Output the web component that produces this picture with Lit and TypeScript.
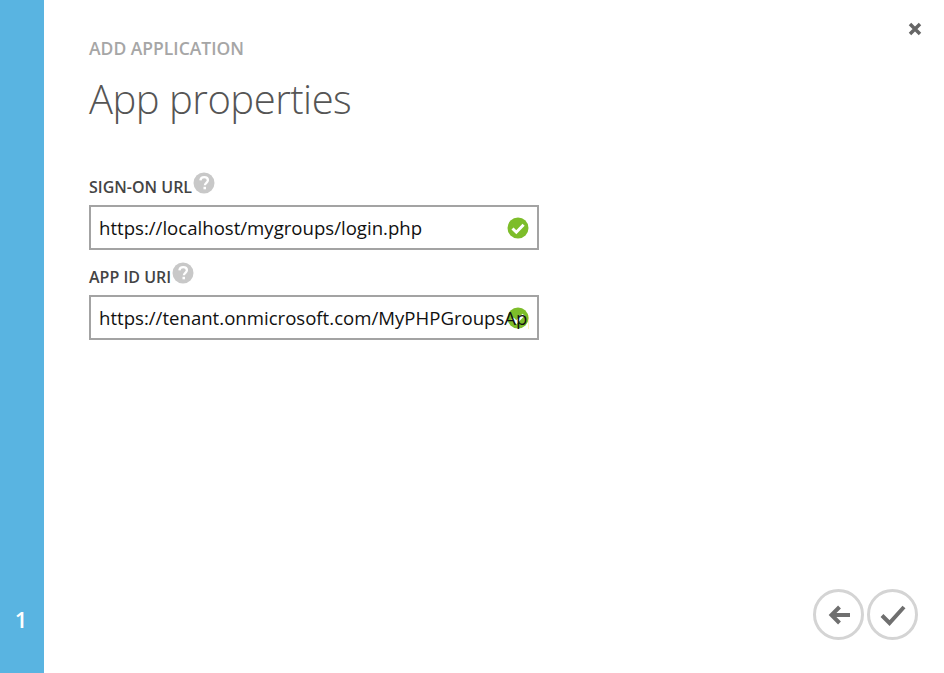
import { LitElement, html, css } from 'lit'
import { customElement } from 'lit/decorators.js'

const helpIcon = html`
  <svg class="help" viewBox="0 0 22 22" width="22" height="22">
    <circle cx="11" cy="11" r="10.500" fill="#c8c8c8" />
    <path d="M7.400 8.400c.2-2.100 1.700-3.200 3.800-3.200 2.200 0 3.700 1.200 3.700 3 0 2.600-3 2.700-3 5.100" fill="none" stroke="#fff" stroke-width="2.300" />
    <rect x="10.500" y="14.800" width="2.500" height="2.500" fill="#fff" />
  </svg>
`

const okIcon = html`
  <svg class="ok" viewBox="0 0 22 22" width="22" height="22">
    <circle cx="11" cy="11" r="10.500" fill="#7dbd2a" />
    <path d="M5.500 11.500l3.800 3.700 7.300-7.400" fill="none" stroke="#fff" stroke-width="3" />
  </svg>
`

@customElement('app-root')
export class AppRoot extends LitElement {
  static styles = css`
    :host {
      display: flex;
      width: 944px;
      height: 673px;
      background: #fff;
      font-family: "Open Sans", "Noto Sans", "Liberation Sans", sans-serif;
      overflow: hidden;
    }

    .steps {
      width: 44px;
      flex: none;
      background: #59b4e1;
      display: flex;
      flex-direction: column;
      justify-content: flex-end;
      align-items: center;
      padding: 0 2px 39px 0;
      box-sizing: border-box;
      color: #fff;
      font-size: 22px;
      font-weight: 600;
      line-height: 30px;
    }

    .main {
      flex: 1;
      position: relative;
      display: flex;
      flex-direction: column;
      padding: 37px 26px 33px 45px;
      min-width: 0;
    }

    .close {
      position: absolute;
      top: 22px;
      right: 22px;
      display: block;
      filter: blur(0.4px);
    }

    .eyebrow {
      font-size: 17.500px;
      font-weight: 600;
      line-height: 22px;
      color: #a6a6a6;
      margin: 0;
    }

    h1 {
      font-size: 40px;
      font-weight: 300;
      line-height: 58px;
      color: #555;
      margin: 11px 0 0;
      letter-spacing: -0.5px;
    }

    .form {
      margin-top: 43px;
      display: flex;
      flex-direction: column;
      gap: 11px;
      width: 450px;
    }

    .field {
      display: flex;
      flex-direction: column;
    }

    .label {
      display: flex;
      align-items: flex-start;
      height: 34px;
      font-size: 16px;
      font-weight: 600;
      line-height: 22px;
      color: #444;
      padding-top: 3px;
      box-sizing: border-box;
    }

    .label span {
      margin-top: 2px;
    }

    .help {
      margin: -2px 0 0 1px;
    }

    .control {
      position: relative;
      height: 45px;
    }

    .ok {
      position: absolute;
      top: 12px;
      right: 10px;
    }

    input {
      position: relative;
      width: 100%;
      height: 100%;
      box-sizing: border-box;
      border: 2px solid #a3a3a3;
      background: transparent;
      padding: 0 8px;
      margin: 0;
      outline: none;
      font: inherit;
      font-size: 18.600px;
      color: #111;
    }

    .actions {
      margin-top: auto;
      display: flex;
      justify-content: flex-end;
      gap: 3px;
    }

    .action {
      width: 51px;
      height: 51px;
      padding: 0;
      border: 3px solid #d4d4d4;
      border-radius: 50%;
      background: #fff;
      box-sizing: border-box;
      display: flex;
      align-items: center;
      justify-content: center;
      cursor: pointer;
      filter: blur(0.4px);
    }
  `

  render() {
    return html`
      <div class="steps">1</div>
      <div class="main">
        <svg class="close" viewBox="0 0 14 14" width="14" height="14">
          <path d="M2 2l10 10M12 2L2 12" stroke="#666" stroke-width="3.500" fill="none" />
        </svg>
        <p class="eyebrow">ADD APPLICATION</p>
        <h1>App properties</h1>
        <div class="form">
          <div class="field">
            <div class="label"><span>SIGN-ON URL</span>${helpIcon}</div>
            <div class="control">
              ${okIcon}
              <input value="https://localhost/mygroups/login.php" />
            </div>
          </div>
          <div class="field">
            <div class="label"><span>APP ID URI</span>${helpIcon}</div>
            <div class="control">
              ${okIcon}
              <input value="https://tenant.onmicrosoft.com/MyPHPGroupsApp" />
            </div>
          </div>
        </div>
        <div class="actions">
          <button class="action" aria-label="Back">
            <svg viewBox="0 0 24 24" width="24" height="24">
              <path d="M23 12H5M12.500 4l-8 8 8 8" fill="none" stroke="#6f6f6f" stroke-width="4" />
            </svg>
          </button>
          <button class="action" aria-label="Finish">
            <svg viewBox="0 0 26 24" width="26" height="24">
              <path d="M2 12.500l7.500 7.500L24 4" fill="none" stroke="#6f6f6f" stroke-width="4" />
            </svg>
          </button>
        </div>
      </div>
    `
  }
}
